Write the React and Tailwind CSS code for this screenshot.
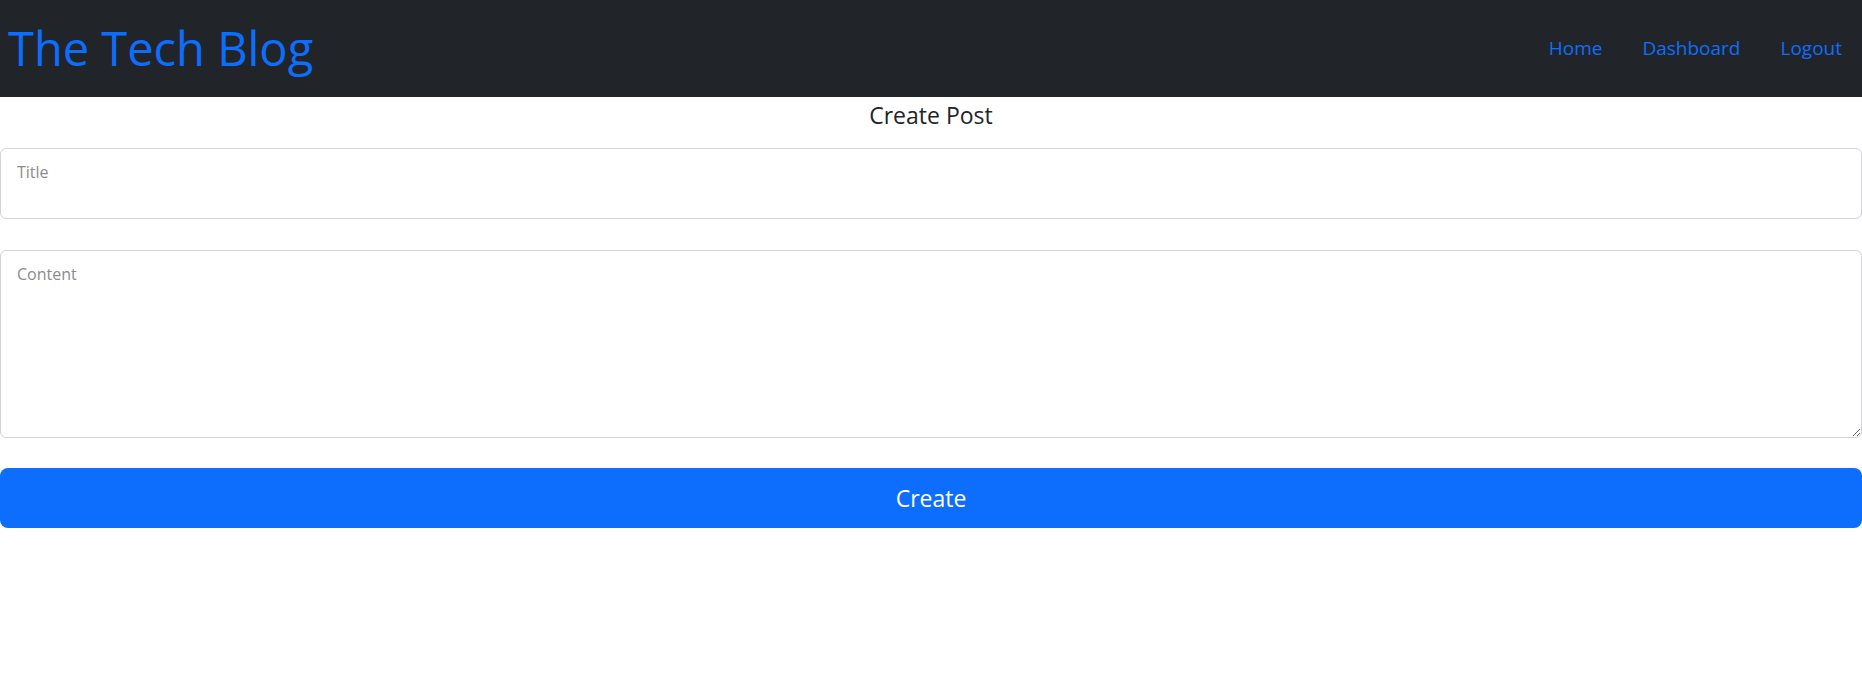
import React from 'react';

const font = { fontFamily: '"Open Sans", "Noto Sans", sans-serif' };

function Navbar() {
    return (
        <nav className="h-[97px] bg-[#212529] flex items-center justify-between">
            <a href="#" className="pl-2 text-[47px] leading-none text-[#0d6efd] font-normal">The Tech Blog</a>
            <div className="flex items-center text-[19px] text-[#0d6efd]">
                <a href="#" className="px-5">Home</a>
                <a href="#" className="px-5">Dashboard</a>
                <a href="#" className="px-5">Logout</a>
            </div>
        </nav>
    );
}

export default function App() {
    return (
        <div className="min-h-[685px] bg-white" style={font}>
            <Navbar />
            <form className="flex flex-col" onSubmit={(e) => e.preventDefault()}>
                <h2 className="text-center text-[23px] leading-[34px] text-[#212529] mt-[1px]">Create Post</h2>
                <input
                    type="text"
                    placeholder="Title"
                    className="mt-[16px] h-[71px] w-full border border-[#d3d3d8] rounded-md px-4 pb-[24px] text-[16px] placeholder-[#8c8c8c] outline-none"
                />
                <textarea
                    placeholder="Content"
                    className="mt-[31px] h-[188px] w-full border border-[#d3d3d8] rounded-md px-4 pt-[11px] text-[16px] placeholder-[#8c8c8c] outline-none"
                />
                <button type="submit" className="mt-[30px] h-[60px] w-full rounded-lg bg-[#0d6efd] text-white text-[23px]">
                    Create
                </button>
            </form>
        </div>
    );
}
